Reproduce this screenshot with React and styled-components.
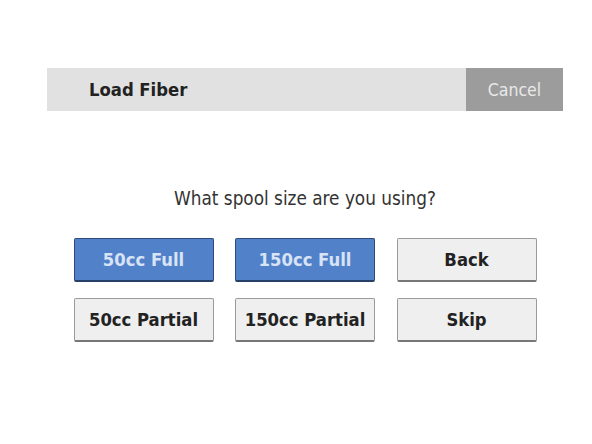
import styled, { createGlobalStyle } from "styled-components";

const GlobalStyle = createGlobalStyle`
  html, body {
    margin: 0;
    background: #ffffff;
    font-family: "DejaVu Sans Condensed", "DejaVu Sans", Verdana, sans-serif;
    font-stretch: condensed;
  }
`;

const Screen = styled.div`
  width: 516px;
  padding: 68px 0 0 47px;
`;

const Header = styled.div`
  display: flex;
  height: 43px;
  background: #e1e1e1;
`;

const Title = styled.div`
  flex: 1;
  display: flex;
  align-items: center;
  padding-left: 42px;
  font-size: 18.3px;
  font-weight: bold;
  color: #222222;
`;

const CancelButton = styled.div`
  width: 97px;
  display: flex;
  align-items: center;
  justify-content: center;
  background: #9c9c9c;
  color: #e9e9e9;
  font-size: 17.5px;
`;

const Question = styled.div`
  margin-top: 77px;
  height: 22px;
  line-height: 22px;
  text-align: center;
  font-size: 18.8px;
  color: #333333;
`;

const Grid = styled.div`
  margin-top: 28px;
  display: grid;
  grid-template-columns: repeat(3, 140px);
  grid-auto-rows: 44px;
  column-gap: 21.5px;
  row-gap: 16px;
  justify-content: center;
`;

const Button = styled.div`
  box-sizing: border-box;
  display: flex;
  align-items: center;
  justify-content: center;
  border-radius: 2px;
  font-size: 18.3px;
  font-weight: bold;
  background: ${(p) => (p.$primary ? "#5181c9" : "#efefef")};
  color: ${(p) => (p.$primary ? "#d8e3f5" : "#222222")};
  border: 1px solid ${(p) => (p.$primary ? "#2d4a78" : "#9a9a9a")};
  border-bottom: 2px solid ${(p) => (p.$primary ? "#263f66" : "#777777")};
`;

const buttons = [
  { label: "50cc Full", primary: true },
  { label: "150cc Full", primary: true },
  { label: "Back" },
  { label: "50cc Partial" },
  { label: "150cc Partial" },
  { label: "Skip" },
];

export default function App() {
  return (
    <>
      <GlobalStyle />
      <Screen>
        <Header>
          <Title>Load Fiber</Title>
          <CancelButton>Cancel</CancelButton>
        </Header>
        <Question>What spool size are you using?</Question>
        <Grid>
          {buttons.map((b) => (
            <Button key={b.label} $primary={b.primary}>
              {b.label}
            </Button>
          ))}
        </Grid>
      </Screen>
    </>
  );
}
